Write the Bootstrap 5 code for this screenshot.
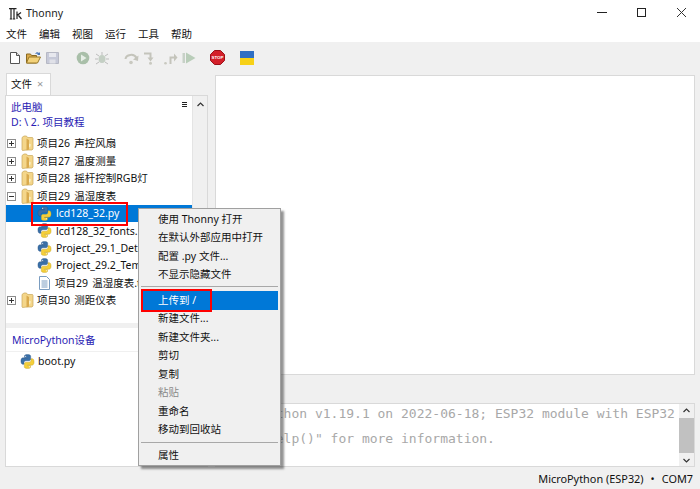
<!DOCTYPE html>
<html lang="zh">
<head>
<meta charset="utf-8">
<title>Thonny</title>
<link href="https://cdn.jsdelivr.net/npm/bootstrap@5.3.0/dist/css/bootstrap.min.css" rel="stylesheet">
<style>
html,body{margin:0;width:700px;height:489px;overflow:hidden;background:#f0f0f0}
body,.appwin{font-family:"Noto Sans","Noto Sans CJK SC",sans-serif;font-size:10.5px;color:#111;line-height:1.2}
.appwin{width:700px;height:489px;position:relative}
.titlebar{height:25px;background:#fff;padding-left:9px}
.titlebar .ttl{font-size:10.5px;margin-left:4px;margin-top:2px;color:#222}
.winbtns{margin-left:auto;display:block;width:120px;height:25px}
.menubar{height:17px;background:#fff;padding:1px 0 0 6px;gap:12.5px}
.menubar span{width:20.5px;white-space:nowrap}
.toolbar{height:31px;padding-left:8px}
.toolbar svg{display:block;flex:none}
.workarea{height:394px;padding-left:5px;padding-right:5px}
.leftcol{width:203px;flex:none}
.filetab{width:45px;height:22px;margin-left:1px;background:#fff;border:1px solid #d9d9d9;border-bottom:0;padding:4px 0 0 4px;gap:5px;font-size:10.5px}
.filetab i{font-style:normal;color:#999;font-size:11px;line-height:12px}
.leftpane{height:372px;border:1px solid #d9d9d9;background:#fff}
.toppane{height:227px}
.treewrap{width:186px;flex:none;position:relative}
.sidebar{width:15px;flex:none;background:#f0f0f0;border-left:1px solid #e4e4e4;margin-left:auto}
.crumbs{height:39px;padding:4px 0 0 5px;color:#2a1db4;line-height:15px;position:relative}
.burger{position:absolute;right:5px;top:6px;width:5px;height:5px;border-top:1px solid #222;border-bottom:1px solid #222}
.burger::after{content:"";display:block;height:1px;background:#222;margin-top:1px}
.treerow{height:17.45px;white-space:nowrap;overflow:hidden;word-spacing:1.5px}
.treerow svg{flex:none;display:block}
.exp{margin-left:1px;margin-right:5px}
.fold{margin-right:3px}
.kid{padding-left:31px}
.kid .py{margin-right:4px}
.kid.docrow{padding-left:33px}
.kid.docrow .doc{margin-right:5px}
.treerow.sel{background:#0078d7;color:#fff}
.panebar{height:5px;background:#f0f0f0}
.devtitle{height:24px;padding:6px 0 0 6px;color:#2a1db4;border-bottom:1px solid #f0f0f0}
.devrow{height:19px;padding-left:14px}
.devrow .py{margin-right:3px}
.rightcol{width:480px;flex:none;margin-left:7px}
.editorbox{height:300px;margin-top:2px;background:#fff;border:1px solid #d9d9d9}
.shellgap{height:28px}
.shellbox{height:64px;background:#fff;border:1px solid #d9d9d9;position:relative;overflow:hidden}
.shelltxt{font-family:"DejaVu Sans Mono","Liberation Mono",monospace;font-size:13px;color:#a8a8a8;line-height:25px;margin-top:-3px;padding-left:5px;white-space:pre;overflow:hidden;flex:1}
.shellbar{width:15px;flex:none;background:#f0f0f0;position:relative}
.shellbar .thumb{position:absolute;left:0;right:0;top:14px;height:35px;background:#c1c1c1}
.statusbar{height:22px;padding:1px 7px 0 0;font-size:10.9px;color:#111;gap:7px}
.ctxmenu{position:absolute;left:138px;top:208px;width:143px;height:258px;background:#f0f0f0;border:1px solid #a0a0a0;box-shadow:3px 3px 2px rgba(60,60,60,.55);padding:1px 2px;color:#111}
.ctxitem{height:18.45px;padding-left:17px;white-space:nowrap}
.ctxitem.hot{background:#0078d7;color:#fff;height:19px;margin-bottom:-.5px}
.ctxitem.dis{color:#8a8a8a}
.ctxsep{height:1px;background:#a8a8a8;margin:2.5px 0 3.7px}
.ctxsep.lastsep{margin:3px 0 4px}
.redbox{position:absolute;border:2px solid #f00;pointer-events:none}
.rb1{left:31px;top:202px;width:97px;height:24px}
.rb2{left:141px;top:289px;width:71px;height:23px}
.arrow{position:absolute;left:4px}
</style>
</head>
<body>
<svg width="0" height="0" class="position-absolute">
<defs>
<symbol id="pyico" viewBox="0 0 16 16">
<path d="M7.9.6C4.6.6 4.8 2 4.8 2v1.6h3.2v.5H3.4S1 3.8 1 7.500s2.100 3.500 2.100 3.500h1.200V9.300s-.1-2.100 2.100-2.100h3.100s1.900 0 1.900-1.900V2.500S11.800.6 7.900.6z" fill="#3a70a8" stroke="#2a5480" stroke-width=".4"/>
<path d="M8.100 15.400c3.300 0 3.100-1.400 3.100-1.400v-1.600H8v-.5h4.600S15 12.200 15 8.500s-2.100-3.500-2.100-3.500h-1.200v1.700s.1 2.100-2.100 2.100H6.500s-1.900 0-1.900 1.900v2.800s-.4 1.900 3.500 1.900z" fill="#f5cf3a" stroke="#b89a22" stroke-width=".4"/>
<circle cx="6" cy="2.400" r=".6" fill="#fff"/><circle cx="10" cy="13.600" r=".6" fill="#fff"/>
</symbol>
<symbol id="folderico" viewBox="0 0 13 17">
<path d="M1 2.500 3 1h2.500l1 1.500H11.500l.5 1V14l-1 1H5.500L1.500 15.500 1 15z" fill="#f4d68a" stroke="#c8a75a" stroke-width=".7"/>
<path d="M5.500 3.500 8 5v9.500L5.500 15.500z" fill="#d9aa4e"/>
<path d="M8 8.500 10 9.500 9 12.500 8 12z" fill="#f9eec4"/>
</symbol>
<symbol id="plusbox" viewBox="0 0 9 9">
<rect x=".5" y=".5" width="8" height="8" fill="#fff" stroke="#8c8c8c"/><path d="M2 4.500h5M4.500 2v5" stroke="#333"/>
</symbol>
<symbol id="minusbox" viewBox="0 0 9 9">
<rect x=".5" y=".5" width="8" height="8" fill="#fff" stroke="#8c8c8c"/><path d="M2 4.500h5" stroke="#333"/>
</symbol>
</defs>
</svg>
<div class="appwin d-flex flex-column">
  <div class="titlebar d-flex align-items-center">
    <svg width="13" height="12" viewBox="0 0 13 12" fill="none" stroke="#222" stroke-width="1.200" style="margin-top:2px"><path d="M0 .7h7.500M2 .7v10M5 .7v10M.8 11h2.400M3.800 11h2.400M8 3.500v7.500M8 7.500l4-3M9.500 7.500 12.500 11"/></svg>
    <span class="ttl">Thonny</span>
    <svg class="winbtns" viewBox="580 0 120 25"><path d="M597 12.500h10" stroke="#222"/><rect x="637.500" y="8.500" width="8" height="8" fill="none" stroke="#222"/><path d="M677 8l9 9M686 8l-9 9" stroke="#333"/></svg>
  </div>
  <div class="menubar d-flex align-items-center"><span>文件</span><span>编辑</span><span>视图</span><span>运行</span><span>工具</span><span>帮助</span></div>
  <div class="toolbar d-flex align-items-center">
    <svg width="14" height="14" viewBox="0 0 14 14"><path d="M2.500 1.500h6l3 3v8h-9z" fill="#fff" stroke="#555"/><path d="M8.500 1.500v3h3" fill="#ddd" stroke="#555"/></svg>
    <svg width="15" height="14" viewBox="0 0 15 14" style="margin-left:4px"><path d="M.5 3h4l1 1.500h5V12H.5z" fill="#d9a84a" stroke="#8a6a20"/><path d="M3 6h11.500l-3 6H.5z" fill="#f3d27a" stroke="#9a7a2a"/><path d="M9 3c1-2 3-2 4-1l1-1v3h-3l1-1c-1-.5-2-.5-3 0z" fill="#4a78b8"/></svg>
    <svg width="13" height="14" viewBox="0 0 13 14" style="margin-left:5px"><path d="M.5 1.500h12v11H.5z" fill="#c6c9d8" stroke="#b6b8c4"/><rect x="3" y="2" width="7" height="4" fill="#e7e8ee"/><rect x="3.500" y="8.500" width="6" height="4" fill="#e0e1e8"/></svg>
    <svg width="14" height="14" viewBox="0 0 14 14" style="margin-left:17px"><circle cx="7" cy="7" r="6.300" fill="#a9bfa9"/><path d="M5 3.500 10.500 7 5 10.500z" fill="#e6eee6"/></svg>
    <svg width="14" height="14" viewBox="0 0 14 14" style="margin-left:5px"><ellipse cx="7" cy="8" rx="3.500" ry="4" fill="#c4cfc4"/><path d="M1 3l3 2M13 3l-3 2M0 8h3M14 8h-3M1 13l3-2M13 13l-3-2M7 1v3" stroke="#bdbdbd"/></svg>
    <svg width="15" height="14" viewBox="0 0 15 14" style="margin-left:15px" fill="none"><path d="M1.500 8C2 3.500 10 2 12.500 7" stroke="#c4c4bb" stroke-width="2"/><path d="M14.500 4.500 14 10l-5-1.500z" fill="#c4c4bb"/><circle cx="7" cy="11.500" r="1.800" fill="#c9c9c0"/></svg>
    <svg width="14" height="14" viewBox="0 0 14 14" style="margin-left:5px" fill="none"><path d="M0 2.500h6.500V8" stroke="#c4c4bb" stroke-width="2"/><path d="M3.500 6.500h6l-3 4z" fill="#c4c4bb"/><circle cx="6.500" cy="12.300" r="1.500" fill="#c9c9c0"/></svg>
    <svg width="15" height="14" viewBox="0 0 15 14" style="margin-left:5px" fill="none"><path d="M7.500 13V6.500H12" stroke="#c4c4bb" stroke-width="2"/><path d="M11 2.500l3.500 4-3.500 4z" fill="#c4c4bb"/><circle cx="2.500" cy="12.300" r="1.300" fill="#c9c9c0"/></svg>
    <svg width="14" height="14" viewBox="0 0 14 14" style="margin-left:4px"><rect x=".5" y="2" width="2.500" height="10" fill="#c7d1c7"/><path d="M4 1.500 13.500 7 4 12.500z" fill="#b9cdb9"/></svg>
    <svg width="15" height="15" viewBox="0 0 15 15" style="margin-left:14px"><path d="M4.500.5h6l4 4v6l-4 4h-6l-4-4v-6z" fill="#d3202a" stroke="#9a1018"/><text x="7.500" y="9.400" font-size="4.400" font-family="Liberation Sans" font-weight="700" fill="#fff" text-anchor="middle">STOP</text></svg>
    <svg width="14" height="14" viewBox="0 0 14 14" style="margin-left:15px"><rect width="14" height="7" fill="#2f6fc4"/><rect y="7" width="14" height="7" fill="#f7d117"/></svg>
  </div>
  <div class="workarea d-flex">
    <div class="leftcol d-flex flex-column">
      <div class="filetab d-flex align-items-start"><span>文件</span><i>×</i></div>
      <div class="leftpane d-flex flex-column">
        <div class="toppane d-flex">
          <div class="treewrap">
            <div class="crumbs">此电脑<br>D: \ 2. 项目教程<span class="burger"></span></div>
            <div class="treerow d-flex align-items-center"><svg class="exp" width="9" height="9"><use href="#plusbox"/></svg><svg class="fold" width="13" height="17"><use href="#folderico"/></svg><span>项目26 声控风扇</span></div>
            <div class="treerow d-flex align-items-center"><svg class="exp" width="9" height="9"><use href="#plusbox"/></svg><svg class="fold" width="13" height="17"><use href="#folderico"/></svg><span>项目27 温度测量</span></div>
            <div class="treerow d-flex align-items-center"><svg class="exp" width="9" height="9"><use href="#plusbox"/></svg><svg class="fold" width="13" height="17"><use href="#folderico"/></svg><span>项目28 摇杆控制RGB灯</span></div>
            <div class="treerow d-flex align-items-center"><svg class="exp" width="9" height="9"><use href="#minusbox"/></svg><svg class="fold" width="13" height="17"><use href="#folderico"/></svg><span>项目29 温湿度表</span></div>
            <div class="treerow sel kid d-flex align-items-center"><svg class="py" width="15" height="15"><use href="#pyico"/></svg>lcd128_32.py</div>
            <div class="treerow kid d-flex align-items-center"><svg class="py" width="15" height="15"><use href="#pyico"/></svg>lcd128_32_fonts.py</div>
            <div class="treerow kid d-flex align-items-center"><svg class="py" width="15" height="15"><use href="#pyico"/></svg>Project_29.1_Detect</div>
            <div class="treerow kid d-flex align-items-center"><svg class="py" width="15" height="15"><use href="#pyico"/></svg>Project_29.2_Temper</div>
            <div class="treerow kid docrow d-flex align-items-center"><svg class="doc" width="11" height="14" viewBox="0 0 11 14"><path d="M.5.5h7l3 3v10H.5z" fill="#fff" stroke="#7a9cc0"/><path d="M2.500 5h6M2.500 7h6M2.500 9h6M2.500 11h6" stroke="#7a9cc0"/></svg><span>项目29 温湿度表.txt</span></div>
            <div class="treerow d-flex align-items-center"><svg class="exp" width="9" height="9"><use href="#plusbox"/></svg><svg class="fold" width="13" height="17"><use href="#folderico"/></svg><span>项目30 测距仪表</span></div>
          </div>
          <div class="sidebar position-relative"><svg class="arrow" style="top:6px" width="7" height="5" viewBox="0 0 7 5"><path d="M.5 4 3.500 1 6.500 4" fill="none" stroke="#333" stroke-width="1.200"/></svg></div>
        </div>
        <div class="panebar"></div>
        <div class="devtitle">MicroPython设备</div>
        <div class="devrow d-flex align-items-center"><svg class="py" width="15" height="15"><use href="#pyico"/></svg>boot.py</div>
      </div>
    </div>
    <div class="rightcol d-flex flex-column">
      <div class="editorbox"></div>
      <div class="shellgap"></div>
      <div class="shellbox d-flex">
        <div class="shelltxt">MicroPython v1.19.1 on 2022-06-18; ESP32 module with ESP32
Type "help()" for more information.</div>
        <div class="shellbar"><svg class="arrow" style="top:4px" width="7" height="5" viewBox="0 0 7 5"><path d="M.5 4 3.500 1 6.500 4" fill="none" stroke="#333" stroke-width="1.200"/></svg><div class="thumb"></div><svg class="arrow" style="top:54px" width="7" height="5" viewBox="0 0 7 5"><path d="M.5 1 3.500 4 6.500 1" fill="none" stroke="#333" stroke-width="1.200"/></svg></div>
      </div>
    </div>
  </div>
  <div class="statusbar d-flex align-items-center justify-content-end"><span>MicroPython (ESP32)</span><span>•</span><span>COM7</span></div>

  <div class="ctxmenu">
    <div class="ctxitem d-flex align-items-center">使用 Thonny 打开</div>
    <div class="ctxitem d-flex align-items-center">在默认外部应用中打开</div>
    <div class="ctxitem d-flex align-items-center">配置 .py 文件...</div>
    <div class="ctxitem d-flex align-items-center">不显示隐藏文件</div>
    <div class="ctxsep"></div>
    <div class="ctxitem hot d-flex align-items-center">上传到 /</div>
    <div class="ctxitem d-flex align-items-center">新建文件...</div>
    <div class="ctxitem d-flex align-items-center">新建文件夹...</div>
    <div class="ctxitem d-flex align-items-center">剪切</div>
    <div class="ctxitem d-flex align-items-center">复制</div>
    <div class="ctxitem dis d-flex align-items-center">粘贴</div>
    <div class="ctxitem d-flex align-items-center">重命名</div>
    <div class="ctxitem d-flex align-items-center">移动到回收站</div>
    <div class="ctxsep lastsep"></div>
    <div class="ctxitem d-flex align-items-center">属性</div>
  </div>
  <div class="redbox rb1"></div>
  <div class="redbox rb2"></div>
</div>
<script src="https://cdn.jsdelivr.net/npm/bootstrap@5.3.0/dist/js/bootstrap.bundle.min.js"></script>
</body>
</html>
